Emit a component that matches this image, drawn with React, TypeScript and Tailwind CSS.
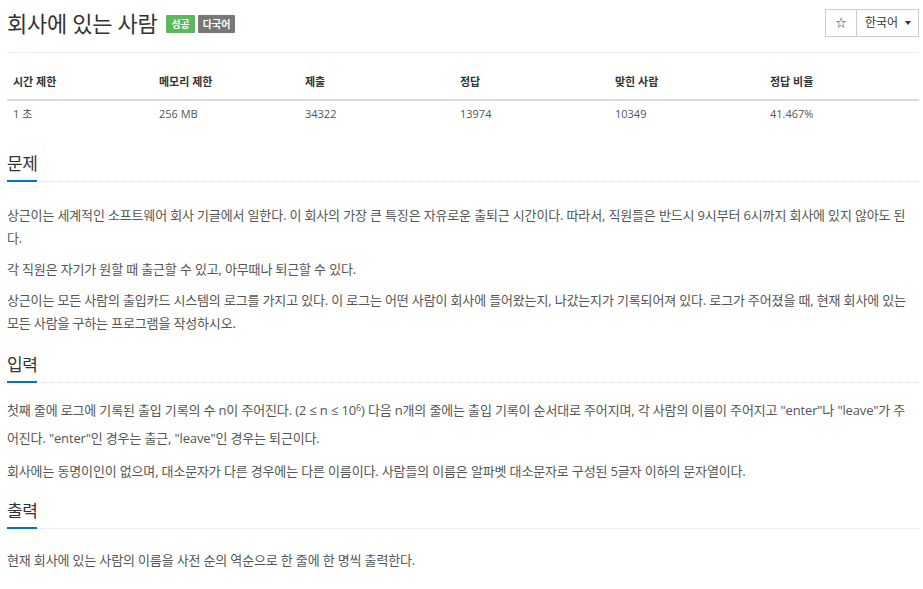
const stats = [
  { label: "시간 제한", value: "1 초" },
  { label: "메모리 제한", value: "256 MB" },
  { label: "제출", value: "34322" },
  { label: "정답", value: "13974" },
  { label: "맞힌 사람", value: "10349" },
  { label: "정답 비율", value: "41.467%" },
];

const Heading = ({ title, space }: { title: string; space: string }) => (
  <div className={`${space} flex items-end border-b border-dotted border-[#ddd]`}>
    <h2 className="text-[17px] leading-[24px] text-[#333] pb-[4px] border-b-2 border-[#0076c0] -mb-[1px] whitespace-nowrap tracking-[-0.5px]">
      {title}
    </h2>
  </div>
);

export default function App() {
  return (
    <div className="min-h-[589px] bg-white pl-[7px] pr-[4px] text-[#555] font-['Open_Sans','Noto_Sans_CJK_KR',sans-serif]">
      {/* title */}
      <div className="flex items-center justify-between border-b border-[#eee] pt-[9px] pb-[15px]">
        <div className="flex items-center">
          <h1 className="text-[22px] leading-[28px] text-[#333] tracking-[-0.3px] mr-[9px]">회사에 있는 사람</h1>
          <span className="mt-[2px] px-[5px] h-[18px] flex items-center text-[10px] font-bold text-white bg-[#5cb85c] rounded-[1px]">
            성공
          </span>
          <span className="ml-[3px] mt-[2px] px-[5px] h-[18px] flex items-center text-[10px] font-bold text-white bg-[#777] rounded-[1px]">
            다국어
          </span>
        </div>
        <div className="flex h-[28px] border border-[#ccc] text-[12px] text-[#333]">
          <div className="w-[31px] flex items-center justify-center border-r border-[#ccc] text-[11px]">☆</div>
          <div className="w-[61px] flex items-center justify-between pl-[8px] pr-[7px]">
            한국어
            <span className="w-0 h-0 border-l-[3px] border-r-[3px] border-t-[4px] border-l-transparent border-r-transparent border-t-[#333]" />
          </div>
        </div>
      </div>

      {/* stats table */}
      <div className="mt-[17px] text-[11px]">
        <div className="grid grid-cols-[146px_146px_155px_155px_155px_155px] border-b-2 border-[#ddd] pb-[8px] pt-[4px] font-bold text-[#333]">
          {stats.map((s) => (
            <div key={s.label} className="px-[6px]">
              {s.label}
            </div>
          ))}
        </div>
        <div className="grid grid-cols-[146px_146px_155px_155px_155px_155px] py-[5px] text-[#555]">
          {stats.map((s) => (
            <div key={s.label} className="px-[6px]">
              {s.value}
            </div>
          ))}
        </div>
      </div>

      {/* 문제 */}
      <Heading title="문제" space="mt-[25px] mb-[22px]" />
      <div className="text-[13px] leading-[23px] tracking-[-0.15px] space-y-[8px]">
        <p>
          상근이는 세계적인 소프트웨어 회사 기글에서 일한다. 이 회사의 가장 큰 특징은 자유로운 출퇴근 시간이다. 따라서, 직원들은 반드시 9시부터 6시까지 회사에 있지 않아도 된다.
        </p>
        <p>각 직원은 자기가 원할 때 출근할 수 있고, 아무때나 퇴근할 수 있다.</p>
        <p>
          상근이는 모든 사람의 출입카드 시스템의 로그를 가지고 있다. 이 로그는 어떤 사람이 회사에 들어왔는지, 나갔는지가 기록되어져 있다. 로그가 주어졌을 때, 현재 회사에 있는 모든 사람을 구하는 프로그램을 작성하시오.
        </p>
      </div>

      {/* 입력 */}
      <Heading title="입력" space="mt-[18px] mb-[16px]" />
      <div className="text-[13px] leading-[23px] tracking-[-0.15px] space-y-[10px]">
        <p>
          <span className="block pb-[5px]">
            첫째 줄에 로그에 기록된 출입 기록의 수 n이 주어진다. (2 ≤ n ≤ 10<sup className="text-[9px]">6</sup>) 다음 n개의 줄에는 출입 기록이 순서대로 주어지며, 각 사람의 이름이 주어지고 "enter"나 "leave"가 주
          </span>
          <span className="block">어진다. "enter"인 경우는 출근, "leave"인 경우는 퇴근이다.</span>
        </p>
        <p>
          회사에는 동명이인이 없으며, 대소문자가 다른 경우에는 다른 이름이다. 사람들의 이름은 알파벳 대소문자로 구성된 5글자 이하의 문자열이다.
        </p>
      </div>

      {/* 출력 */}
      <Heading title="출력" space="mt-[16px] mb-[20px]" />
      <div className="text-[13px] leading-[23px] tracking-[-0.15px]">
        <p>현재 회사에 있는 사람의 이름을 사전 순의 역순으로 한 줄에 한 명씩 출력한다.</p>
      </div>
    </div>
  );
}
